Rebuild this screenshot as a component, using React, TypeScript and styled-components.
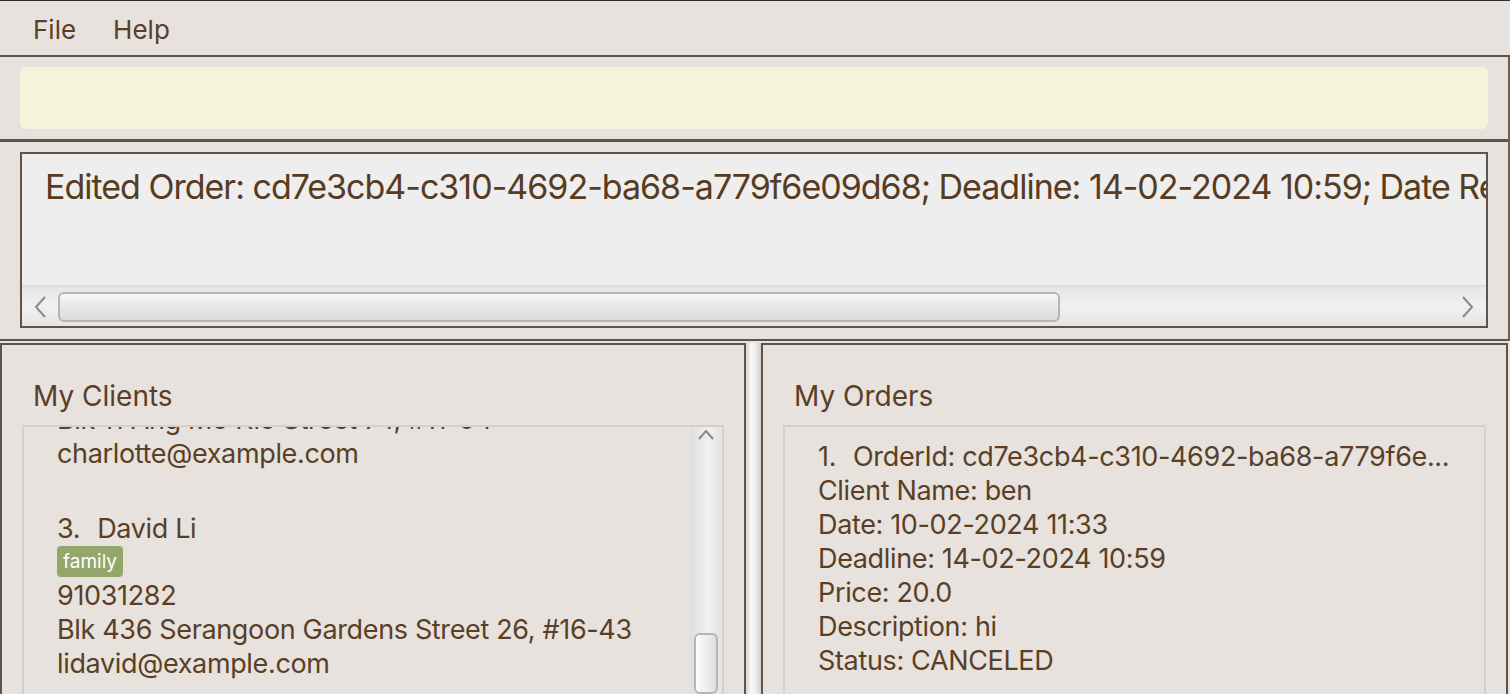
import React, { useLayoutEffect, useRef } from 'react';
import styled, { createGlobalStyle } from 'styled-components';

const GlobalStyle = createGlobalStyle`
  html, body {
    margin: 0;
    padding: 0;
    height: 100%;
    overflow: hidden;
  }

  body {
    background: #e7e2dd;
    font-family: Inter, 'Noto Sans', sans-serif;
    color: #5a3f26;
  }
`;

const Window = styled.div`
  display: flex;
  flex-direction: column;
  height: 694px;
  width: 1510px;
  border-top: 1px solid #2e2e2e;
  box-sizing: border-box;
  overflow: hidden;
  background: #e7e2dd;
`;

const MenuBar = styled.div`
  display: flex;
  align-items: center;
  height: 56px;
  padding: 3px 0 0 33px;
  gap: 37px;
  border-bottom: 2px solid #5e544b;
  box-sizing: border-box;
  flex-shrink: 0;
`;

const MenuItem = styled.span`
  font-size: 26px;
  color: #5a3f26;
`;

const TopArea = styled.div`
  border-right: 2px solid #6a5f56;
  flex-shrink: 0;
`;

const CommandSection = styled.div`
  padding: 10px 20px;
  border-bottom: 3px solid #5e544b;
`;

const CommandBox = styled.div`
  height: 62px;
  background: #f4f4dc;
  border-radius: 6px;
`;

const ResultSection = styled.div`
  padding: 10px 20px 11px;
  border-bottom: 2px solid #5e544b;
`;

const ResultBox = styled.div`
  height: 176px;
  box-sizing: border-box;
  border: 2px solid #5e544b;
  background: #eeeeee;
  display: flex;
  flex-direction: column;
`;

const ResultText = styled.div`
  flex: 1;
  padding: 13px 0 0 23px;
  font-size: 34px;
  line-height: 40px;
  letter-spacing: -1px;
  white-space: nowrap;
  overflow: hidden;
  color: #573c22;
`;

const HScrollBar = styled.div`
  display: flex;
  align-items: center;
  height: 41px;
  box-sizing: border-box;
  border-top: 2px solid #dcdcdc;
  background: linear-gradient(to bottom, #e6e6e6, #f0f0f0 50%, #e4e4e4);
`;

const ArrowCell = styled.div<{ $w: number }>`
  width: ${(p) => p.$w}px;
  display: flex;
  align-items: center;
  justify-content: center;
  flex-shrink: 0;
`;

const HThumb = styled.div`
  width: 1002px;
  height: 30px;
  box-sizing: border-box;
  border: 2px solid #b5b5b5;
  border-radius: 6px;
  background: linear-gradient(to bottom, #f8f8f8, #e4e4e4 60%, #dadada);
`;

const Spacer = styled.div`
  flex: 1;
`;

const PanelsRow = styled.div`
  display: flex;
  flex: 1;
  min-height: 0;
  margin-top: 2px;
  padding-right: 2px;
`;

const Panel = styled.div<{ $w: number }>`
  width: ${(p) => p.$w}px;
  flex-shrink: 0;
  box-sizing: border-box;
  border: 2px solid #5e544b;
  border-bottom: none;
  padding: 34px 20px 0 20px;
  display: flex;
  flex-direction: column;
`;

const Splitter = styled.div`
  width: 15px;
  flex-shrink: 0;
  background: linear-gradient(to right, #d4d4d4, #f8f8f8 35%, #eeeeee 65%, #cfcfcf);
`;

const PanelTitle = styled.div`
  padding-left: 11px;
  font-size: 28px;
  line-height: 34px;
  margin-bottom: 12px;
  color: #5a3f26;
`;

const ListBox = styled.div`
  flex: 1;
  min-height: 0;
  display: flex;
  border: 2px solid #d4d0cb;
  border-bottom: none;
`;

const ListViewport = styled.div`
  flex: 1;
  position: relative;
  overflow: hidden;
`;

const Card = styled.div`
  padding: 13px 0 28px 33px;
  font-size: 27px;
  line-height: 34px;
  letter-spacing: -0.35px;
  color: #5a3f26;
`;

const NameRow = styled.div`
  display: flex;
  gap: 17px;
  white-space: nowrap;
`;

const TagRow = styled.div`
  display: flex;
  gap: 6px;
  margin-bottom: 2px;
`;

const Tag = styled.span`
  display: inline-block;
  background: #94a66a;
  color: #ffffff;
  font-size: 19px;
  line-height: 31px;
  letter-spacing: 0;
  padding: 0 6px;
  border-radius: 4px;
`;

const Line = styled.div`
  white-space: nowrap;
`;

const VScrollBar = styled.div`
  width: 32px;
  flex-shrink: 0;
  display: flex;
  flex-direction: column;
  align-items: center;
  padding-top: 2px;
  background: linear-gradient(to right, #dedede, #ececec 40%, #f0f0f0 60%, #e2e2e2);
`;

const VThumb = styled.div`
  margin-top: 193px;
  width: 24px;
  height: 200px;
  box-sizing: border-box;
  border: 2px solid #b5b5b5;
  border-radius: 6px;
  background: linear-gradient(to right, #fbfbfb, #ececec 60%, #dedede);
`;

const Chevron = ({ dir }: { dir: 'left' | 'right' | 'up' }) => {
  const d =
    dir === 'left'
      ? 'M11 1 L2 11 L11 21'
      : dir === 'right'
      ? 'M2 1 L11 11 L2 21'
      : 'M1 10 L8 2 L15 10';
  const w = dir === 'up' ? 16 : 13;
  const h = dir === 'up' ? 11 : 22;
  return (
    <svg width={w} height={h} viewBox={`0 0 ${w} ${h}`}>
      <path d={d} fill="none" stroke="#8a8a8a" strokeWidth="2" />
    </svg>
  );
};

type Client = {
  name: string;
  tags: string[];
  phone: string;
  address: string;
  email: string;
};

const clients: Client[] = [
  {
    name: 'Ben',
    tags: ['friends'],
    phone: '87438807',
    address: 'Blk 30 Geylang Street 29, #06-40',
    email: 'ben@example.com',
  },
  {
    name: 'Charlotte Oliveiro',
    tags: ['neighbours'],
    phone: '93210283',
    address: 'Blk 11 Ang Mo Kio Street 74, #11-04',
    email: 'charlotte@example.com',
  },
  {
    name: 'David Li',
    tags: ['family'],
    phone: '91031282',
    address: 'Blk 436 Serangoon Gardens Street 26, #16-43',
    email: 'lidavid@example.com',
  },
  {
    name: 'Irfan Ibrahim',
    tags: ['classmates'],
    phone: '92492021',
    address: 'Blk 47 Tampines Street 20, #17-35',
    email: 'irfan@example.com',
  },
];

const orderLines = [
  'Client Name: ben',
  'Date: 10-02-2024 11:33',
  'Deadline: 14-02-2024 10:59',
  'Price: 20.0',
  'Description: hi',
  'Status: CANCELED',
];

const App = () => {
  const viewportRef = useRef<HTMLDivElement>(null);
  const anchorRef = useRef<HTMLDivElement>(null);

  // list is scrolled so that only the tail of Charlotte's card shows
  useLayoutEffect(() => {
    if (viewportRef.current && anchorRef.current) {
      viewportRef.current.scrollTop = anchorRef.current.offsetTop + 24;
    }
  }, []);

  return (
    <>
      <GlobalStyle />
      <Window>
        <MenuBar>
          <MenuItem>File</MenuItem>
          <MenuItem>Help</MenuItem>
        </MenuBar>

        <TopArea>
          <CommandSection>
            <CommandBox />
          </CommandSection>

          <ResultSection>
            <ResultBox>
              <ResultText>
                Edited Order: cd7e3cb4-c310-4692-ba68-a779f6e09d68; Deadline: 14-02-2024 10:59; Date Received: 10-02-2024 11:33; Price: 20.0; Description: hi; Status: CANCELED
              </ResultText>
              <HScrollBar>
                <ArrowCell $w={36}>
                  <Chevron dir="left" />
                </ArrowCell>
                <HThumb />
                <Spacer />
                <ArrowCell $w={38}>
                  <Chevron dir="right" />
                </ArrowCell>
              </HScrollBar>
            </ResultBox>
          </ResultSection>
        </TopArea>

        <PanelsRow>
          <Panel $w={746}>
            <PanelTitle>My Clients</PanelTitle>
            <ListBox>
              <ListViewport ref={viewportRef}>
                {clients.map((c, i) => (
                  <Card key={c.email}>
                    <NameRow>
                      <span>{i + 1}.</span>
                      <span>{c.name}</span>
                    </NameRow>
                    <TagRow>
                      {c.tags.map((t) => (
                        <Tag key={t}>{t}</Tag>
                      ))}
                    </TagRow>
                    <Line>{c.phone}</Line>
                    <Line ref={i === 1 ? anchorRef : undefined}>{c.address}</Line>
                    <Line>{c.email}</Line>
                  </Card>
                ))}
              </ListViewport>
              <VScrollBar>
                <ArrowCell $w={32}>
                  <Chevron dir="up" />
                </ArrowCell>
                <VThumb />
              </VScrollBar>
            </ListBox>
          </Panel>

          <Splitter />

          <Panel $w={747}>
            <PanelTitle>My Orders</PanelTitle>
            <ListBox>
              <ListViewport>
                <Card>
                  <NameRow>
                    <span>1.</span>
                    <span>OrderId: cd7e3cb4-c310-4692-ba68-a779f6e...</span>
                  </NameRow>
                  {orderLines.map((l) => (
                    <Line key={l}>{l}</Line>
                  ))}
                </Card>
              </ListViewport>
            </ListBox>
          </Panel>
        </PanelsRow>
      </Window>
    </>
  );
};

export default App;
